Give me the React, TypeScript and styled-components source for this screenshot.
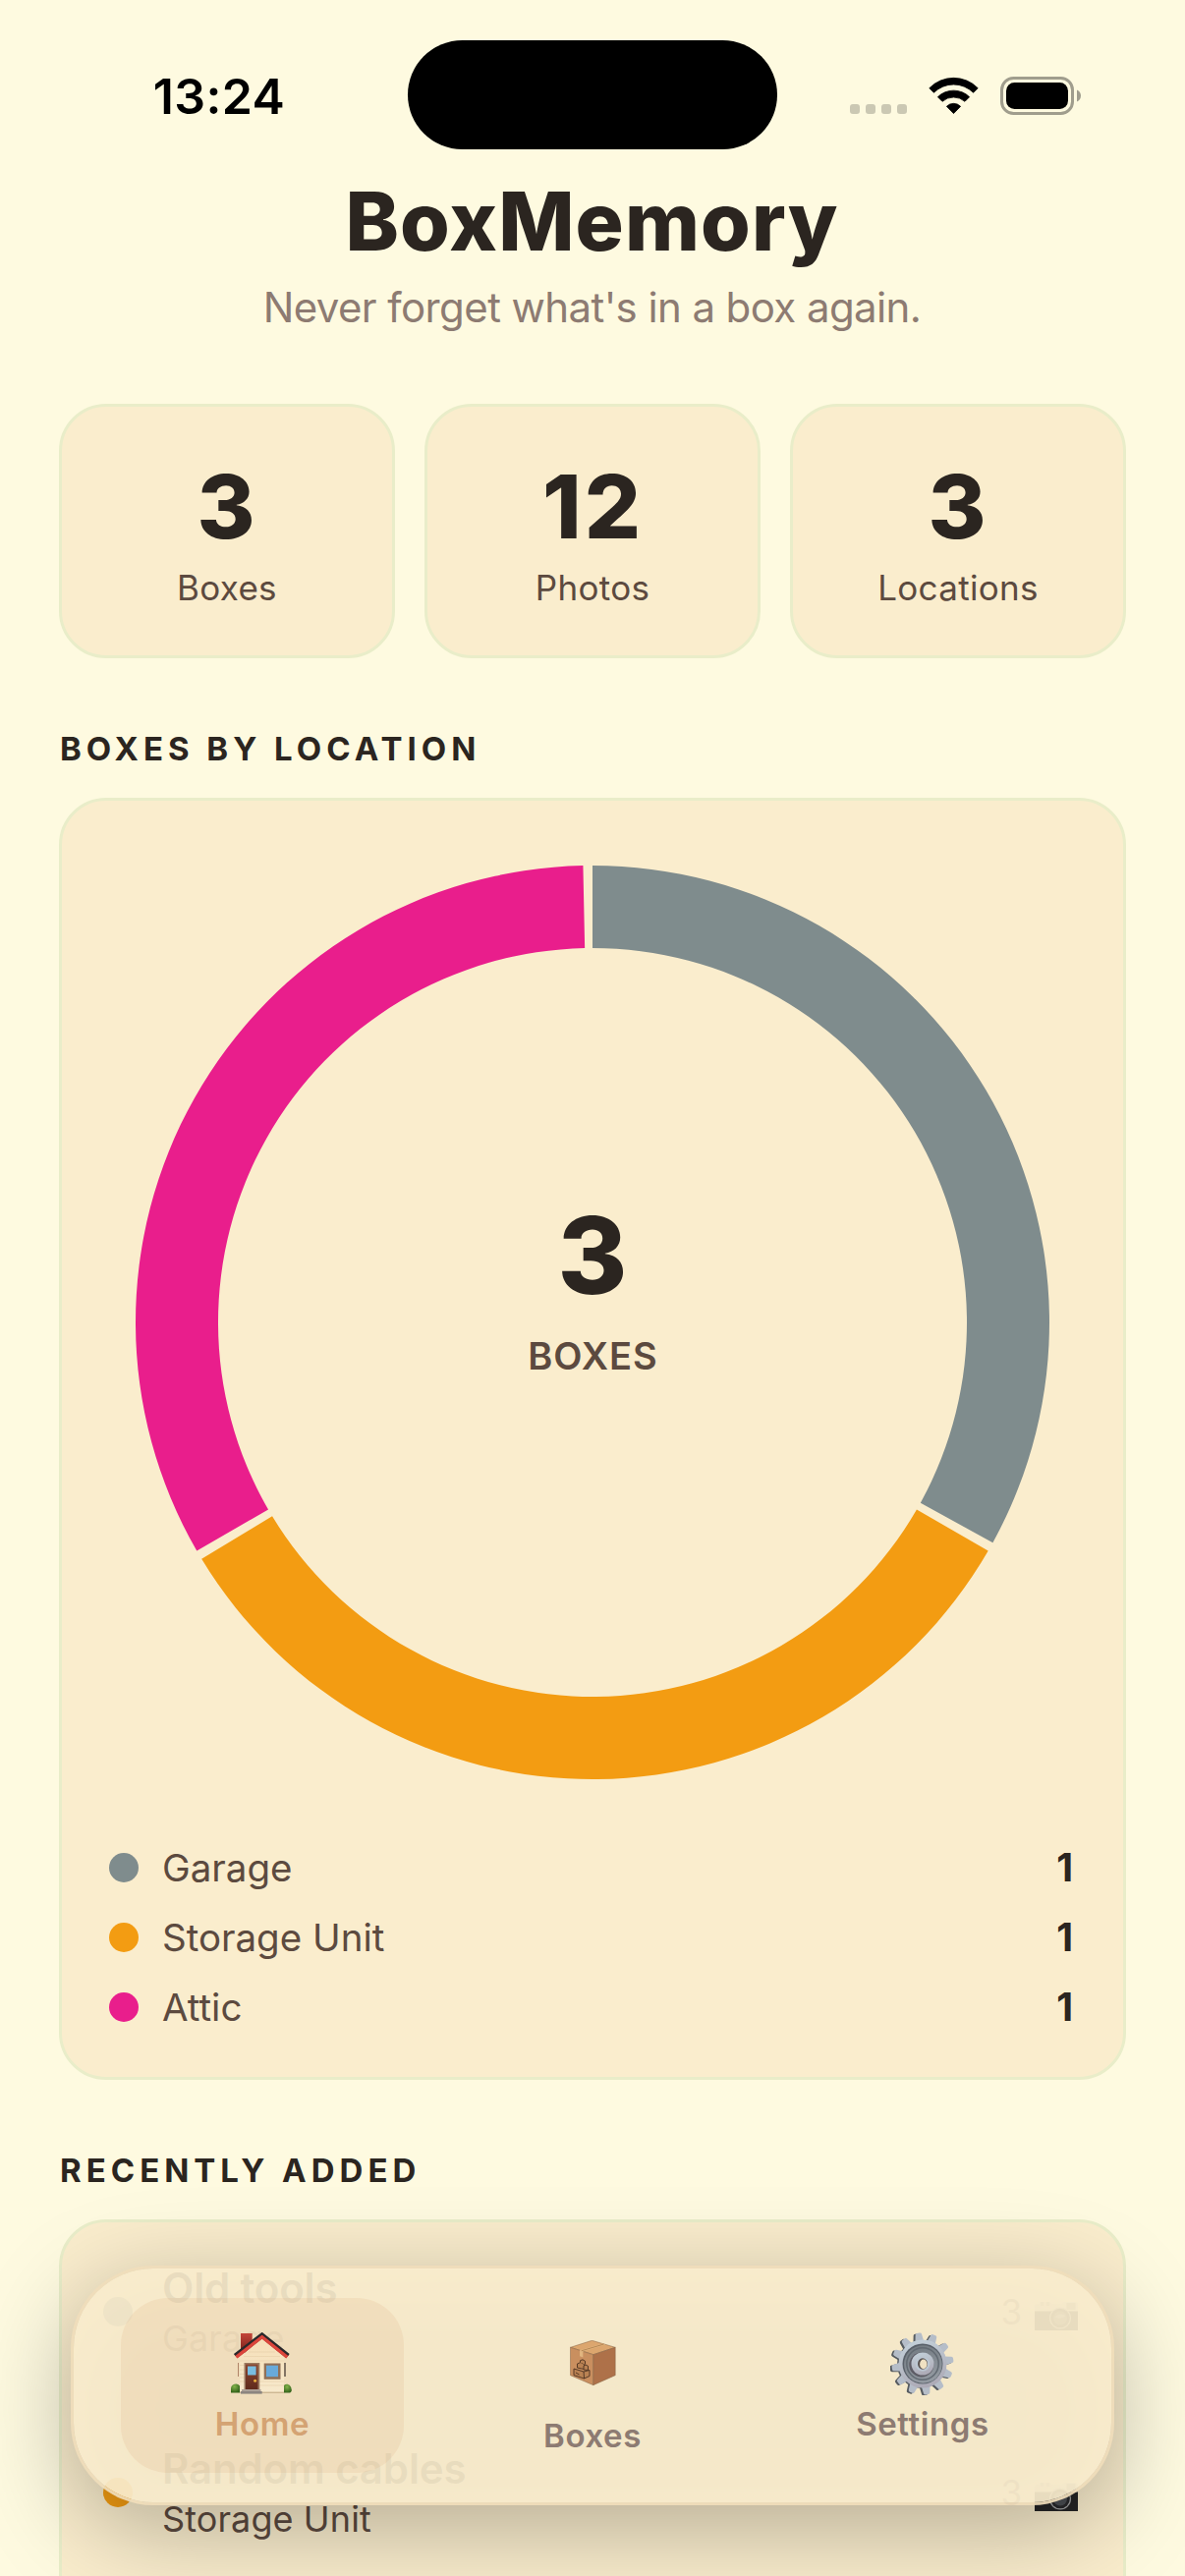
import React, { FC } from 'react';
import styled, { createGlobalStyle } from 'styled-components';

const colors = {
    background: '#fefae0',
    card: '#faedcd',
    border: '#e9edc9',
    text: '#2b2520',
    textSecondary: '#5c4a3f',
    textMuted: '#8d7b72',
    accent: '#d4a373',
};

const GlobalStyle = createGlobalStyle`
    * {
        box-sizing: border-box;
    }

    body {
        margin: 0;
        background: ${colors.background};
        font-family: Inter, 'Liberation Sans', sans-serif;
        color: ${colors.text};
    }
`;

const Screen = styled.div`
    position: relative;
    width: 1206px;
    height: 2622px;
    overflow: hidden;
    background: ${colors.background};
`;

const StatusBar = styled.div`
    display: grid;
    grid-template-columns: 415px 376px 415px;
    height: 152px;
    padding-top: 41px;
`;

const Time = styled.div`
    padding: 3px 0 0 31px;
    text-align: center;
    font-size: 50px;
    font-weight: 600;
    line-height: 108px;
    letter-spacing: 0.4px;
    color: #000;
`;

const Island = styled.div`
    height: 111px;
    border-radius: 56px;
    background: #000;
`;

const StatusIcons = styled.div`
    display: flex;
    justify-content: flex-end;
    align-items: flex-start;
    padding: 37px 106px 0 0;
`;

const Header = styled.header`
    display: flex;
    flex-direction: column;
    align-items: center;
    padding-top: 25px;
`;

const Title = styled.h1`
    margin: 0;
    padding-right: 1px;
    font-size: 82px;
    font-weight: 800;
    line-height: 97px;
    letter-spacing: 1.1px;
`;

const Subtitle = styled.p`
    margin: 13px 0 0;
    padding-right: 1px;
    font-size: 42px;
    line-height: 51px;
    letter-spacing: -0.6px;
    color: ${colors.textMuted};
`;

const Content = styled.main`
    display: flex;
    flex-direction: column;
    padding: 73px 60px 0;
`;

const Card = styled.div`
    border: 3px solid ${colors.border};
    border-radius: 48px;
    background: ${colors.card};
`;

const Stats = styled.div`
    display: grid;
    grid-template-columns: repeat(3, 1fr);
    gap: 30px;
`;

const StatCard = styled(Card)`
    display: flex;
    flex-direction: column;
    align-items: center;
    height: 259px;
    padding-top: 49px;
`;

const StatValue = styled.div`
    padding-left: 1px;
    font-size: 90px;
    font-weight: 850;
    line-height: 106px;
    letter-spacing: 3px;
`;

const StatLabel = styled.div`
    margin-top: 8px;
    font-size: 35px;
    line-height: 43px;
    letter-spacing: 0.3px;
    color: ${colors.textSecondary};
`;

const SectionTitle = styled.h2`
    margin: 72px 0 30px;
    padding-left: 1px;
    font-size: 33px;
    font-weight: 700;
    line-height: 40px;
    letter-spacing: 5px;
`;

const ChartCard = styled(Card)`
    display: flex;
    flex-direction: column;
    align-items: center;
    padding: 66px 48px 48px;
`;

const Donut = styled.div`
    display: grid;
    place-items: center;
    width: 930px;
    height: 930px;

    > * {
        grid-area: 1 / 1;
    }
`;

const DonutCenter = styled.div`
    display: flex;
    flex-direction: column;
    align-items: center;
    padding-bottom: 75px;
`;

const DonutValue = styled.div`
    font-size: 108px;
    font-weight: 780;
    line-height: 128px;
`;

const DonutLabel = styled.div`
    margin-top: 15px;
    padding-left: 1px;
    font-size: 38px;
    font-weight: 600;
    line-height: 46px;
    letter-spacing: 1px;
    color: ${colors.textSecondary};
`;

const Legend = styled.div`
    display: flex;
    flex-direction: column;
    align-self: stretch;
    gap: 25px;
    margin-top: 67px;
`;

const LegendRow = styled.div`
    display: flex;
    align-items: center;
    height: 46px;
    padding-right: 3px;
    line-height: 44px;
`;

const Dot = styled.span<{ $color: string }>`
    flex: none;
    width: 30px;
    height: 30px;
    border-radius: 50%;
    background: ${(p) => p.$color};
`;

const LegendName = styled.span`
    flex: 1;
    margin-left: 24px;
    padding-bottom: 1px;
    font-size: 38.5px;
    color: ${colors.textSecondary};
`;

const LegendCount = styled.span`
    padding-bottom: 1px;
    font-size: 39px;
    font-weight: 700;
`;

const RecentCard = styled(Card)`
    display: flex;
    flex-direction: column;
    gap: 2px;
    height: 780px;
    padding: 0 42px;
`;

const RecentRow = styled.div`
    display: flex;
    align-items: center;
    height: 182px;
`;

const RecentText = styled.div`
    flex: 1;
    margin-left: 30px;
`;

const RecentName = styled.div`
    font-size: 42px;
    font-weight: 600;
    line-height: 54px;
    letter-spacing: -0.15px;
`;

const RecentPlace = styled.div`
    margin-top: 1px;
    padding-bottom: 1px;
    font-size: 36px;
    line-height: 46px;
    letter-spacing: 0.1px;
    color: ${colors.textSecondary};
`;

const PhotoCount = styled.div`
    display: flex;
    align-items: center;
    gap: 13px;
    padding-right: 4px;
    font-size: 35px;
    color: ${colors.textMuted};

    svg {
        margin-top: 7px;
    }
`;

const TabBar = styled.nav`
    position: absolute;
    left: 72px;
    right: 72px;
    bottom: 72px;
    height: 244px;
    z-index: 1;

    /* the surface is translucent, so the shadow has to show through it */
    &::before {
        content: '';
        position: absolute;
        inset: 0;
        border-radius: 84px;
        background: rgba(0, 0, 0, 0.28);
        transform: translateY(24px);
        filter: blur(48px);
    }
`;

const TabSurface = styled.div`
    position: relative;
    display: flex;
    height: 100%;
    padding: 30px 24px;
    border: 3px solid rgba(240, 221, 187, 0.92);
    border-radius: 84px;
    background: rgba(250, 237, 205, 0.92);
    background-clip: padding-box;
`;

const Tab = styled.div<{ $active?: boolean; $drop?: number }>`
    flex: 1;
    display: flex;
    flex-direction: column;
    align-items: center;
    height: 178px;
    margin: 0 24px;
    padding-top: ${(p) => 35 + (p.$drop || 0)}px;
    border-radius: 48px;
    background: ${(p) => (p.$active ? 'rgba(212, 163, 115, 0.15)' : 'transparent')};
    font-size: 33px;
    font-weight: 600;
    line-height: 40px;
    letter-spacing: 0.6px;
    color: ${(p) => (p.$active ? colors.accent : colors.textMuted)};
`;

const TabLabel = styled.span<{ $gap: number }>`
    margin-top: ${(p) => p.$gap}px;
`;

const SignalIcon = () => (
    <svg width="58" height="39" viewBox="0 0 58 39">
        {[0, 16, 32, 48].map((x) => (
            <rect key={x} x={x} y="28" width="10" height="10" rx="3" fill="#cbc8b3" />
        ))}
    </svg>
);

const WifiIcon = () => (
    <svg width="52" height="39" viewBox="-1 0 52 39" style={{ marginLeft: 22 }}>
        <g stroke="#000" strokeWidth=".8" strokeLinejoin="round">
            <path d="M-.2 11.700A34.600 34.600 0 0 1 49.200 11.700L44.600 16.300A28.500 28.500 0 0 0 4.400 16.300z" />
            <path d="M8.400 20.700A23 23 0 0 1 40.600 20.700L36 25.300A17.500 17.500 0 0 0 13 25.300z" />
            <path d="M17.400 30.300A10 10 0 0 1 31.600 30.300L24.500 37.600z" />
        </g>
    </svg>
);

const BatteryIcon = () => (
    <svg width="82" height="39" viewBox="0 0 82 39" style={{ marginLeft: 21 }}>
        <rect x="1.500" y="1.500" width="72" height="36" rx="12" fill="none" stroke="#a09d8d" strokeWidth="3" />
        <rect x="6" y="6" width="63" height="27" rx="8.500" />
        <path d="M78 13.500v12c2.400-1 4-3.300 4-6s-1.600-5-4-6z" fill="#a09d8d" />
    </svg>
);

const HomeIcon = () => (
    <svg width="64" height="64" viewBox="0 0 64 64">
        <defs>
            <linearGradient id="chimney" x1="0" y1="0" x2="0" y2="1">
                <stop offset="0" stopColor="#c44539" />
                <stop offset="1" stopColor="#75201b" />
            </linearGradient>
            <linearGradient id="wall" x1="0" y1="0" x2="0" y2="1">
                <stop offset="0" stopColor="#f6dfb8" />
                <stop offset="1" stopColor="#f7e9cc" />
            </linearGradient>
            <linearGradient id="door" x1="0" y1="0" x2="0" y2="1">
                <stop offset="0" stopColor="#8a4630" />
                <stop offset="1" stopColor="#5f2a1c" />
            </linearGradient>
            <radialGradient id="bush" cx="0.4" cy="0.3" r="0.7">
                <stop offset="0" stopColor="#83b44a" />
                <stop offset="1" stopColor="#33631b" />
            </radialGradient>
        </defs>
        <rect x="10" y="1" width="11.700" height="20" fill="url(#chimney)" />
        <rect x="7" y="31" width="1" height="14" fill="#b08468" />
        <rect x="54.300" y="31" width="1.400" height="14" fill="#54483f" />
        <path d="M0 61.500v-4a5 5 0 0 1 9-3v7z" fill="url(#bush)" />
        <path d="M54 61.500v-7.500c3-3 7.500 0 7.500 3.500 1 2-.5 4-2 4z" fill="url(#bush)" />
        <path d="M9 25L31.700 5.500 54 25v36.700H9z" fill="url(#wall)" />
        <path d="M9 61.200h45" stroke="#bda47c" strokeWidth="1" />
        <path d="M18 20h27M13 24.500h37M9 29h45M9 50h5M29 50h25M29 54h25M9 33.500h5M9 38h5M9 42.500h5M9 46h5" stroke="#e5cfa8" strokeWidth=".6" />
        <path d="M5 24.500L31.700 3.600 57.700 24.500" fill="none" stroke="#a42a25" strokeWidth="4.600" />
        <path d="M5.500 25.200L31.700 4.500 57.200 25.200" fill="none" stroke="#dc463c" strokeWidth="3.200" />
        <path d="M3.600 22.800L31.700 1.200 59 22.800" fill="none" stroke="#29292b" strokeWidth="2.200" />
        <rect x="13.500" y="31" width="15.800" height="28" fill="#9b7a60" />
        <rect x="15" y="32.500" width="12.500" height="26" fill="url(#door)" />
        <rect x="17" y="34.500" width="8.600" height="9" fill="#79bde0" />
        <circle cx="24.600" cy="49.300" r="1.500" fill="#e8b13f" />
        <rect x="33.700" y="31.500" width="16.800" height="16.300" fill="#907058" />
        <rect x="36" y="33.700" width="12" height="11.500" fill="#68a9da" />
        <rect x="11" y="58" width="19.500" height="2.500" fill="#aaa097" />
        <rect x="10" y="60" width="21.700" height="2.600" fill="#8c8580" />
    </svg>
);

const BoxIcon = () => (
    <svg width="47" height="47" viewBox="0 0 47 47">
        <g stroke="#876447" strokeWidth=".5" strokeLinejoin="round">
            <path d="M.5 7.300L22.500.3 46.200 7.300 23.800 14.700z" fill="#dca66e" />
            <path d="M.5 7.300l23.300 7.400v31L.5 35.700z" fill="#c98f5f" />
            <path d="M46.200 7.300L23.800 14.700v31l22.400-10z" fill="#ae7149" />
        </g>
        <path d="M10 10.300L33 3.500l3.300 1L13.300 11.400v6l-3.300-1.200z" fill="#e1b57f" />
        <path d="M11.700 10.800L34.600 4" stroke="#a4713f" strokeWidth=".7" />
        {/* parcels printed on the front face */}
        <g fill="#b98253" stroke="#49301f" strokeWidth=".9" strokeLinejoin="round">
            <path d="M7.500 24l3.500-1.500 3.500 2v5l-7-1.500z" />
            <path d="M10.500 22.500v-1.800l2.500-.9 2.500 1.500v3.200" />
            <path d="M14 26l2-1 2.500 1.300v4.200l-4.500-.5z" />
            <path d="M4 29l10 3 6-1.500v6L14.500 39 4 35.600z" />
            <path d="M14 32l.5 7M6 33l3.500 2" fill="none" />
        </g>
    </svg>
);

const gearTeeth = Array.from({ length: 12 }, (_, i) => i * 30 - 8);

const GearIcon = () => (
    <svg width="66" height="64" viewBox="-33 -32 66 64">
        <defs>
            <linearGradient id="steel" x1="0.3" y1="0" x2="0.6" y2="1">
                <stop offset="0" stopColor="#c3d0d9" />
                <stop offset="1" stopColor="#aca9b5" />
            </linearGradient>
            <linearGradient id="groove" x1="0" y1="0" x2="0.3" y2="1">
                <stop offset="0" stopColor="#70787f" />
                <stop offset="1" stopColor="#9299a0" />
            </linearGradient>
        </defs>
        <g fill="#565b60" transform="translate(-2 .8)">
            {gearTeeth.map((a) => (
                <path key={a} d="M-4.500-22L-3.200-30q.3-1.500 1.800-1.500h2.800q1.500 0 1.800 1.500L4.500-22z" transform={`rotate(${a})`} />
            ))}
            <circle r="24" />
        </g>
        <g fill="#b5bdc8">
            {gearTeeth.map((a) => (
                <path key={a} d="M-4.500-22L-3.200-30q.3-1.500 1.800-1.500h2.800q1.500 0 1.800 1.500L4.500-22z" transform={`rotate(${a})`} />
            ))}
            <circle r="24.500" fill="url(#steel)" />
        </g>
        <circle r="20.500" fill="#596069" />
        <circle r="19.300" cx=".4" cy=".5" fill="url(#groove)" />
        <circle r="16.200" fill="none" stroke="#626a72" strokeWidth="1.500" />
        <circle r="12.500" cx="-1.200" cy="1" fill="#5d5c65" />
        <circle r="11.500" fill="url(#steel)" />
        <circle r="7.500" fill="#bcc7d2" />
        <ellipse rx="5" ry="5.800" fill="#5a5452" />
        <ellipse cx=".8" cy=".4" rx="3.700" ry="4.800" fill="#f0e2c3" />
    </svg>
);

const CameraIcon = () => (
    <svg width="44" height="30" viewBox="0 0 44 30">
        <path d="M0 11V5q0-2 2-2h3V1h11l2 2h9l3-2h11q3 0 3 3v7z" fill="#d8d4c4" />
        <path d="M6 1h3v4H6zM12 1h3v4h-3z" fill="#aaa79b" />
        <path d="M0 10.500h44V30H0z" fill="#252526" />
        <rect x="32.500" y="2" width="9" height="7" fill="#8f8d86" />
        <circle cx="26" cy="17.500" r="11" fill="#a5a5a5" />
        <circle cx="26" cy="17.500" r="9.800" fill="#29292c" />
        <circle cx="26" cy="17.500" r="7" fill="#4b4e53" />
        <path d="M20.500 17q5-6 11-2-3 4-11 2z" fill="#7c8288" />
    </svg>
);

interface Location {
    name: string;
    count: number;
    color: string;
}

const locations: Location[] = [
    { name: 'Garage', count: 1, color: '#7f8c8d' },
    { name: 'Storage Unit', count: 1, color: '#f39c12' },
    { name: 'Attic', count: 1, color: '#e91e8c' },
];

const stats = [
    { value: 3, label: 'Boxes' },
    { value: 12, label: 'Photos' },
    { value: 3, label: 'Locations' },
];

const recent = [
    { name: 'Old tools', place: 'Garage', photos: 3, color: '#7f8c8d' },
    { name: 'Random cables', place: 'Storage Unit', photos: 3, color: '#f39c12' },
];

const OUTER = 465;
const INNER = 381;
const GAP = 1.18;

const point = (radius: number, deg: number) => {
    const rad = (deg * Math.PI) / 180;
    return `${OUTER + radius * Math.sin(rad)} ${OUTER - radius * Math.cos(rad)}`;
};

const slicePath = (start: number, end: number) => {
    const large = end - start > 180 ? 1 : 0;
    return [
        `M${point(OUTER, start)}`,
        `A${OUTER} ${OUTER} 0 ${large} 1 ${point(OUTER, end)}`,
        `L${point(INNER, end)}`,
        `A${INNER} ${INNER} 0 ${large} 0 ${point(INNER, start)}`,
        'Z',
    ].join(' ');
};

const DonutChart: FC<{ data: Location[] }> = ({ data }) => {
    const total = data.reduce((sum, d) => sum + d.count, 0);
    let angle = 0;

    return (
        <Donut>
            <svg width={OUTER * 2} height={OUTER * 2}>
                {data.map((d) => {
                    const start = angle;
                    angle += (d.count / total) * 360;
                    return <path key={d.name} d={slicePath(start, angle - GAP)} fill={d.color} />;
                })}
            </svg>
            <DonutCenter>
                <DonutValue>{total}</DonutValue>
                <DonutLabel>BOXES</DonutLabel>
            </DonutCenter>
        </Donut>
    );
};

const App: FC = () => {
    return (
        <Screen>
            <GlobalStyle />
            <StatusBar>
                <Time>13:24</Time>
                <Island />
                <StatusIcons>
                    <SignalIcon />
                    <WifiIcon />
                    <BatteryIcon />
                </StatusIcons>
            </StatusBar>
            <Header>
                <Title>BoxMemory</Title>
                <Subtitle>Never forget what's in a box again.</Subtitle>
            </Header>
            <Content>
                <Stats>
                    {stats.map((s) => (
                        <StatCard key={s.label}>
                            <StatValue>{s.value}</StatValue>
                            <StatLabel>{s.label}</StatLabel>
                        </StatCard>
                    ))}
                </Stats>
                <SectionTitle>BOXES BY LOCATION</SectionTitle>
                <ChartCard>
                    <DonutChart data={locations} />
                    <Legend>
                        {locations.map((l) => (
                            <LegendRow key={l.name}>
                                <Dot $color={l.color} />
                                <LegendName>{l.name}</LegendName>
                                <LegendCount>{l.count}</LegendCount>
                            </LegendRow>
                        ))}
                    </Legend>
                </ChartCard>
                <SectionTitle>RECENTLY ADDED</SectionTitle>
                <RecentCard>
                    {recent.map((r) => (
                        <RecentRow key={r.name}>
                            <Dot $color={r.color} />
                            <RecentText>
                                <RecentName>{r.name}</RecentName>
                                <RecentPlace>{r.place}</RecentPlace>
                            </RecentText>
                            <PhotoCount>
                                {r.photos}
                                <CameraIcon />
                            </PhotoCount>
                        </RecentRow>
                    ))}
                </RecentCard>
            </Content>
            <TabBar>
                <TabSurface>
                    <Tab $active>
                        <HomeIcon />
                        <TabLabel $gap={9}>Home</TabLabel>
                    </Tab>
                    <Tab $drop={8}>
                        <BoxIcon />
                        <TabLabel $gap={30}>Boxes</TabLabel>
                    </Tab>
                    <Tab>
                        <GearIcon />
                        <TabLabel $gap={9}>Settings</TabLabel>
                    </Tab>
                </TabSurface>
            </TabBar>
        </Screen>
    );
};

export default App;
